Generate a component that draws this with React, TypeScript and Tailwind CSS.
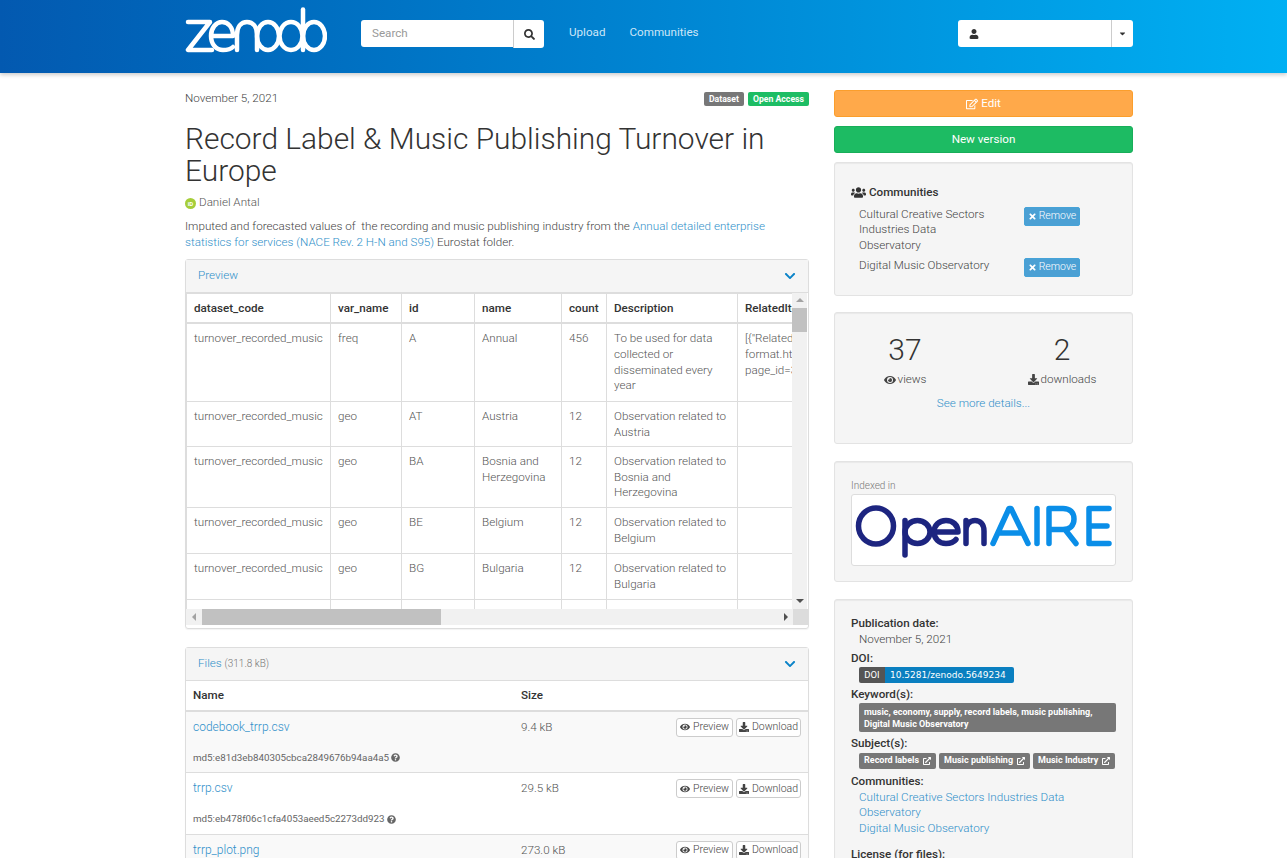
import { FC, ReactNode } from 'react';
import {
  FaCaretDown,
  FaChevronDown,
  FaDownload,
  FaExternalLinkAlt,
  FaEye,
  FaQuestionCircle,
  FaRegEdit,
  FaSearch,
  FaTimes,
  FaUser,
  FaUsers,
} from 'react-icons/fa';

const ZenodoLogo: FC = () => (
  <svg width="142" height="47" viewBox="0 0 142 47" fill="none" stroke="#fff" strokeWidth="4.500" strokeLinecap="round" strokeLinejoin="round">
    <path d="M3 15h22L3 43h24" />
    <path d="M27 29h21M48 29c0-9-5-14-11-14s-11 6-11 14 5 14 12 14c4 0 8-1 10-3" />
    <path d="M52 43V28c0-8 4-13 10-13s10 5 10 13v15" />
    <ellipse cx="83" cy="29" rx="11" ry="14" />
    <ellipse cx="106" cy="29" rx="11.500" ry="14" />
    <path d="M118 2.500V43" />
    <ellipse cx="129" cy="29" rx="11" ry="14" />
  </svg>
);

const OpenAireLogo: FC = () => (
  <svg width="263" height="70" viewBox="0 0 263 70" fill="none" strokeWidth="5.500" strokeLinecap="round" strokeLinejoin="round">
    <g stroke="#1d2580">
      <ellipse cx="24" cy="31" rx="17.500" ry="18" />
      <path d="M53 25.500V60" />
      <ellipse cx="65.500" cy="37" rx="12.500" ry="11.500" />
      <path d="M82 37h24c0-7-5-11.500-12-11.500S82 30.500 82 37s5 11.500 12 11.500c4 0 8-1.500 10-4" />
      <path d="M114 48.500v-23M114 36c0-7 4-10.500 9-10.500s9 3.500 9 10.500v12.500" />
    </g>
    <g stroke="#0a8ee8">
      <path d="M141 48.500l16-35h2l17 35M148 38h22" />
      <path d="M185 13.500v35" />
      <path d="M197 48.500v-35h14c7 0 11 4 11 10.500s-4 10.500-11 10.500h-14M213 34.500l11 14" />
      <path d="M257 13.500h-20v35h20M237 31h18" />
    </g>
  </svg>
);

const Panel: FC<{ title: ReactNode; children: ReactNode; className?: string }> = ({ title, children, className }) => (
  <div className={`border border-[#ddd] rounded-[3px] shadow-[0_1px_1px_rgba(0,0,0,0.05)] ${className ?? ''}`}>
    <div className="flex h-[33px] items-center justify-between bg-[#f5f5f5] border-b border-[#ddd] pl-3 pr-3">
      <div>{title}</div>
      <FaChevronDown className="text-[#0b83c8] text-[12px]" />
    </div>
    {children}
  </div>
);

const Well: FC<{ className?: string; children: ReactNode }> = ({ className, children }) => (
  <div className={`bg-[#f5f5f5] border border-[#e3e3e3] rounded-[3px] shadow-[inset_0_1px_1px_rgba(0,0,0,0.05)] ${className ?? ''}`}>{children}</div>
);

const columns = ['dataset_code', 'var_name', 'id', 'name', 'count', 'Description', 'RelatedItems'];
const widths = ['w-[144px]', 'w-[71px]', 'w-[73px]', 'w-[87px]', 'w-[45px]', 'w-[131px]', 'w-[240px]'];

const rows: { h: string; cells: ReactNode[] }[] = [
  {
    h: 'h-[78px]',
    cells: [
      'turnover_recorded_music',
      'freq',
      'A',
      'Annual',
      '456',
      'To be used for data collected or disseminated every year',
      <>[{'{'}"RelatedIdentifier"<br />format.html?<br />page_id=3</>,
    ],
  },
  { h: 'h-[45px]', cells: ['turnover_recorded_music', 'geo', 'AT', 'Austria', '12', 'Observation related to Austria', ''] },
  { h: 'h-[61px]', cells: ['turnover_recorded_music', 'geo', 'BA', 'Bosnia and Herzegovina', '12', 'Observation related to Bosnia and Herzegovina', ''] },
  { h: 'h-[46px]', cells: ['turnover_recorded_music', 'geo', 'BE', 'Belgium', '12', 'Observation related to Belgium', ''] },
  { h: 'h-[46px]', cells: ['turnover_recorded_music', 'geo', 'BG', 'Bulgaria', '12', 'Observation related to Bulgaria', ''] },
  { h: 'h-[46px]', cells: ['turnover_recorded_music', 'geo', 'CH', 'Switzerland', '12', 'Observation related to Switzerland', ''] },
];

const PreviewTable: FC = () => (
  <div className="flex flex-col pb-[3px]">
    <div className="flex h-[316px]">
      <div className="w-[606px] overflow-hidden">
        <table className="table-fixed w-[791px] border-collapse">
          <thead>
            <tr className="h-[30px]">
              {columns.map((c, i) => (
                <th key={c} className={`${widths[i]} border-x border-t border-b-[2px] border-[#ddd] px-[7px] pt-[1px] text-left font-medium text-[#333] whitespace-nowrap overflow-hidden`}>
                  {c}
                </th>
              ))}
            </tr>
          </thead>
          <tbody>
            {rows.map((r, i) => (
              <tr key={i} className={r.h}>
                {r.cells.map((c, j) => (
                  <td key={j} className="border border-[#ddd] px-[7px] pt-[7px] align-top text-[#555]">
                    {c}
                  </td>
                ))}
              </tr>
            ))}
          </tbody>
        </table>
      </div>
      <div className="flex w-[15px] flex-col items-center bg-[#f1f1f1]">
        <div className="h-[15px] pt-[5px]">
          <div className="border-x-[4px] border-b-[4px] border-x-transparent border-b-[#a3a3a3]" />
        </div>
        <div className="h-[24px] w-[15px] bg-[#c1c1c1]" />
        <div className="flex-1" />
        <div className="h-[15px] pt-[5px]">
          <div className="border-x-[4px] border-t-[4px] border-x-transparent border-t-[#505050]" />
        </div>
      </div>
    </div>
    <div className="flex h-[16px] items-center bg-[#f1f1f1]">
      <div className="flex w-[16px] justify-center">
        <div className="border-y-[4px] border-r-[4px] border-y-transparent border-r-[#a3a3a3]" />
      </div>
      <div className="h-[16px] w-[239px] bg-[#c1c1c1]" />
      <div className="flex-1" />
      <div className="flex w-[15px] justify-center">
        <div className="border-y-[4px] border-l-[4px] border-y-transparent border-l-[#505050]" />
      </div>
      <div className="h-[16px] w-[15px] bg-[#dcdcdc]" />
    </div>
  </div>
);

const files = [
  { name: 'codebook_trrp.csv', size: '9.4 kB', md5: 'md5:e81d3eb840305cbca2849676b94aa4a5', bg: 'bg-[#f9f9f9]' },
  { name: 'trrp.csv', size: '29.5 kB', md5: 'md5:eb478f06c1cfa4053aeed5c2273dd923', bg: 'bg-white' },
  { name: 'trrp_plot.png', size: '273.0 kB', md5: 'md5:0a6f8b14c2', bg: 'bg-[#f9f9f9]' },
];

const SmallButton: FC<{ icon: ReactNode; label: string; className: string }> = ({ icon, label, className }) => (
  <div className={`flex h-[19px] items-center justify-center gap-[3px] rounded-[3px] border border-[#ccc] bg-white text-[10.500px] text-[#444] ${className}`}>
    {icon}
    {label}
  </div>
);

const FileRow: FC<{ file: (typeof files)[number] }> = ({ file }) => (
  <div className={`h-[61.500px] border-b border-[#ddd] pl-[7px] pr-[7px] pt-[6px] ${file.bg}`}>
    <div className="flex items-start">
      <a className="w-[328px] pt-[2px] text-[12px] text-[#2f8fc9]">{file.name}</a>
      <div className="flex-1 pt-[2px] text-[#555]">{file.size}</div>
      <div className="flex gap-[3px]">
        <SmallButton icon={<FaEye className="text-[10px]" />} label="Preview" className="w-[57px]" />
        <SmallButton icon={<FaDownload className="text-[10px]" />} label="Download" className="w-[65px]" />
      </div>
    </div>
    <div className="mt-[13px] flex items-center gap-[2px] text-[9.800px] text-[#666] font-normal">
      {file.md5}
      <FaQuestionCircle className="text-[9px] text-[#666]" />
    </div>
  </div>
);

const Label: FC<{ children: ReactNode; className?: string }> = ({ children, className }) => (
  <div className={`font-medium text-[#333] leading-[16px] ${className ?? ''}`}>{children}</div>
);

const GreyTag: FC<{ children: ReactNode }> = ({ children }) => (
  <span className="flex h-[16px] items-center gap-[4px] whitespace-nowrap rounded-[2px] bg-[#777] px-[5px] text-[9px] font-bold text-white">
    {children}
    <FaExternalLinkAlt className="text-[8px]" />
  </span>
);

const RemoveButton: FC = () => (
  <div className="flex h-[19px] w-[56px] items-center justify-center gap-[2px] rounded-[2px] border border-[#46a3d8] bg-[#4ba0d4] text-[10.500px] text-white">
    <FaTimes className="text-[9px]" />
    Remove
  </div>
);

export default function App() {
  return (
    <div className="h-[858px] overflow-hidden bg-white text-[11.650px] font-light leading-[15.700px] text-[#444] font-['Roboto',sans-serif]">
      <header className="flex h-[73px] pl-[185px] bg-gradient-to-r from-[#0359b0] to-[#00b0f3] shadow-[0_2px_4px_rgba(0,0,0,0.2)]">
        <div className="flex w-[948px] items-start">
          <div className="pt-[7px]">
            <ZenodoLogo />
          </div>
          <div className="ml-[34px] mt-[20px] flex h-[28px]">
            <div className="flex h-[27px] w-[152px] items-center rounded-l-[3px] bg-white pl-[11px] pt-[1px] text-[#999] font-normal">Search</div>
            <div className="flex w-[31px] items-center justify-center rounded-r-[3px] border-l border-[#ccc] bg-white">
              <FaSearch className="text-[11px] text-[#333]" />
            </div>
          </div>
          <div className="ml-[25px] mt-[25px] flex gap-[24px] font-normal text-[#cde6f7]">
            <span>Upload</span>
            <span>Communities</span>
          </div>
          <div className="ml-auto mt-[20px] flex h-[27px] w-[175px] rounded-[3px] bg-white">
            <div className="flex flex-1 items-center pl-[11px]">
              <FaUser className="text-[10px] text-[#333]" />
            </div>
            <div className="flex w-[22px] items-center justify-center border-l border-[#ccc]">
              <FaCaretDown className="text-[9px] text-[#333]" />
            </div>
          </div>
        </div>
      </header>

      <main className="ml-[185px] flex w-[948px] items-start justify-between">
        <section className="w-[624px] pt-[17px]">
          <div className="flex items-start justify-between">
            <span className="pt-[1px]">November 5, 2021</span>
            <div className="mt-[2px] flex gap-[4px] text-[8.700px] font-bold text-white leading-[14px]">
              <span className="rounded-[2px] bg-[#777] px-[5px]">Dataset</span>
              <span className="rounded-[2px] bg-[#1dbd64] px-[5px]">Open Access</span>
            </div>
          </div>
          <h1 className="mt-[16px] text-[29.900px] font-light leading-[32.500px] text-[#333]">Record Label &amp; Music Publishing Turnover in Europe</h1>
          <div className="mt-[7px] flex items-center gap-[3px] text-[#555]">
            <span className="mt-[2px] flex h-[11px] w-[11px] items-center justify-center rounded-full bg-[#a6ce39] text-[6px] font-bold text-white">iD</span>
            Daniel Antal
          </div>
          <p className="mt-[9px]">
            Imputed and forecasted values of &nbsp;the recording and music publishing industry from the{' '}
            <a className="text-[#2f8fc9]">Annual detailed enterprise statistics for services (NACE Rev. 2 H-N and S95)</a> Eurostat folder.
          </p>

          <Panel className="mt-[8px]" title={<span className="text-[#2f8fc9]">Preview</span>}>
            <PreviewTable />
          </Panel>

          <Panel
            className="mt-[18px]"
            title={
              <>
                <span className="text-[#2f8fc9]">Files</span> <span className="text-[10px] text-[#777]">(311.8 kB)</span>
              </>
            }
          >
            <div className="flex h-[31px] items-center border-b-[2px] border-[#ddd] pl-[7px] pt-[1px] font-medium text-[#333]">
              <span className="w-[328px]">Name</span>
              <span>Size</span>
            </div>
            {files.map((f) => (
              <FileRow key={f.name} file={f} />
            ))}
          </Panel>
        </section>

        <aside className="w-[299px] pt-[17px]">
          <div className="flex h-[27px] items-center justify-center gap-[3px] rounded-[3px] border border-[#fb9e2c] bg-[#ffa94a] pt-[1px] text-white font-normal">
            <FaRegEdit className="text-[12px]" />
            Edit
          </div>
          <div className="mt-[9px] flex h-[27px] items-center justify-center rounded-[3px] border border-[#18ae59] bg-[#1dbb63] pt-[1px] text-white font-normal">New version</div>

          <Well className="mt-[9px] h-[134px] pl-[16px] pr-[16px] pt-[22px]">
            <div className="flex items-center gap-[3px] font-medium text-[#333]">
              <FaUsers className="text-[15px]" />
              Communities
            </div>
            <div className="mt-[6px] flex items-start pl-[8px]">
              <div className="w-[165px] pr-[30px]">Cultural Creative Sectors Industries Data Observatory</div>
              <RemoveButton />
            </div>
            <div className="mt-[4px] flex items-start pl-[8px]">
              <div className="w-[165px]">Digital Music Observatory</div>
              <RemoveButton />
            </div>
          </Well>

          <Well className="mt-[16px] h-[132px] pt-[20px]">
            <div className="flex">
              <div className="flex w-[139px] flex-col items-center pl-[1px]">
                <div className="text-[30px] font-light leading-[34px] text-[#333]">37</div>
                <div className="mt-[5px] flex items-center gap-[2px]">
                  <FaEye className="text-[12px]" /> views
                </div>
              </div>
              <div className="flex w-[158px] flex-col items-center pl-[18px]">
                <div className="text-[30px] font-light leading-[34px] text-[#333]">2</div>
                <div className="mt-[5px] flex items-center gap-[2px]">
                  <FaDownload className="text-[11px]" /> downloads
                </div>
              </div>
            </div>
            <div className="mt-[8px] text-center text-[#2f8fc9]">See more details...</div>
          </Well>

          <Well className="mt-[17px] h-[121px] px-[16px] pt-[17px]">
            <div className="text-[10px] leading-[14px] text-[#777]">Indexed in</div>
            <div className="mt-[1px] h-[72px] rounded-[3px] border border-[#ddd] bg-white">
              <OpenAireLogo />
            </div>
          </Well>

          <Well className="mt-[17px] h-[300px] px-[16px] pt-[15px]">
            <Label>Publication date:</Label>
            <div className="mt-[1px] pl-[8px]">November 5, 2021</div>
            <Label className="mt-[2px]">DOI:</Label>
            <div className="ml-[8px] mt-[1px] flex h-[16px] w-[155px] overflow-hidden rounded-[2px] font-normal text-white font-['DejaVu_Sans',sans-serif] leading-[16px]">
              <span className="w-[26px] bg-[#555] text-center text-[9.500px] font-['Roboto',sans-serif]">DOI</span>
              <span className="flex-1 bg-[#0a7fc0] pl-[5px] text-[9px]">10.5281/zenodo.5649234</span>
            </div>
            <Label className="mt-[3px]">Keyword(s):</Label>
            <div className="ml-[8px] mt-[1px] h-[29px] rounded-[2px] bg-[#777] px-[5px] pt-[3px] text-[9px] font-bold leading-[12px] text-white">
              music, economy, supply, record labels, music publishing, Digital Music Observatory
            </div>
            <Label className="mt-[3px]">Subject(s):</Label>
            <div className="ml-[8px] mt-[2px] flex gap-[3px]">
              <GreyTag>Record labels</GreyTag>
              <GreyTag>Music publishing</GreyTag>
              <GreyTag>Music Industry</GreyTag>
            </div>
            <Label className="mt-[4px]">Communities:</Label>
            <div className="mt-[1px] pl-[8px] text-[#2f8fc9]">
              <div>Cultural Creative Sectors Industries Data Observatory</div>
              <div>Digital Music Observatory</div>
            </div>
            <Label className="mt-[9px]">License (for files):</Label>
          </Well>
        </aside>
      </main>
    </div>
  );
}
